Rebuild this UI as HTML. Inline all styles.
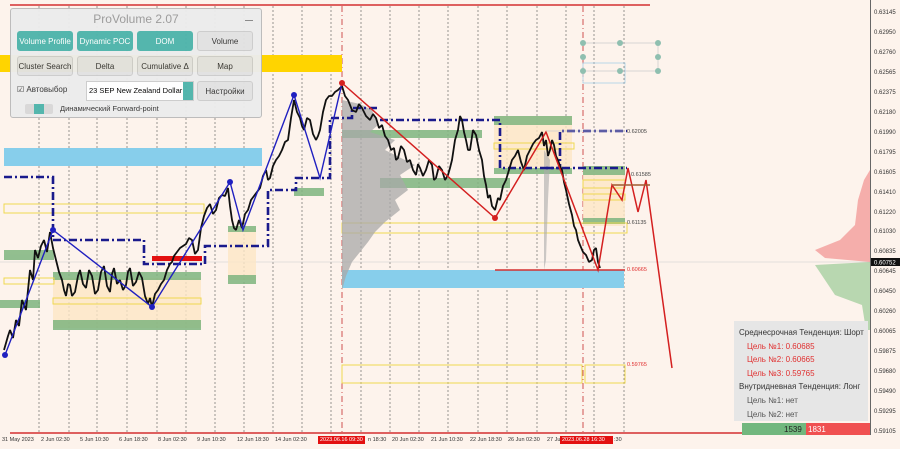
<!DOCTYPE html>
<html><head><meta charset="utf-8">
<style>
*{margin:0;padding:0;box-sizing:border-box}
body{width:900px;height:449px;overflow:hidden;background:#fdf3ec;font-family:"Liberation Sans","DejaVu Sans",sans-serif;position:relative}
svg{position:absolute;left:0;top:0}
.panel{position:absolute;left:10px;top:8px;width:252px;height:110px;background:#ececec;border:1px solid #bbb;border-radius:3px;opacity:.97}
.ttl{position:absolute;left:0;top:3px;width:100%;text-align:center;font-size:12px;color:#9a9a9a}
.mn{position:absolute;right:8px;top:4px;width:8px;border-bottom:1px solid #888;height:8px}
.b{position:absolute;height:20px;border-radius:3px;font-size:8px;text-align:center;line-height:20px;color:#333;background:#e2e2e2;border:1px solid #ccc}
.t{background:#4fb5ab;color:#fff;border-color:#4fb5ab}
.ax{position:absolute;left:874px;font-size:6px;color:#333}
.dt{position:absolute;top:437px;font-size:5.5px;color:#333;white-space:nowrap}
.info{position:absolute;left:734px;top:321px;width:134px;height:100px;background:#e6e6e6;font-size:8px;color:#333;padding:5px 0 0 5px;line-height:13.6px}
.info .r{color:#e03030;padding-left:8px}.info .g{color:#555;padding-left:8px}
</style></head><body>
<svg width="900" height="449" viewBox="0 0 900 449">
<g stroke="#555" stroke-width="0.6" stroke-dasharray="2,2">
<line x1="39" y1="6" x2="39" y2="433"/><line x1="69" y1="6" x2="69" y2="433"/><line x1="97" y1="6" x2="97" y2="433"/><line x1="127" y1="6" x2="127" y2="433"/><line x1="157" y1="6" x2="157" y2="433"/><line x1="186" y1="6" x2="186" y2="433"/><line x1="215" y1="6" x2="215" y2="433"/><line x1="244" y1="6" x2="244" y2="433"/><line x1="273" y1="6" x2="273" y2="433"/><line x1="302" y1="6" x2="302" y2="433"/><line x1="331" y1="6" x2="331" y2="433"/><line x1="361" y1="6" x2="361" y2="433"/><line x1="390" y1="6" x2="390" y2="433"/><line x1="419" y1="6" x2="419" y2="433"/><line x1="448" y1="6" x2="448" y2="433"/><line x1="478" y1="6" x2="478" y2="433"/><line x1="507" y1="6" x2="507" y2="433"/><line x1="537" y1="6" x2="537" y2="433"/><line x1="566" y1="6" x2="566" y2="433"/><line x1="594" y1="6" x2="594" y2="433"/><line x1="624" y1="6" x2="624" y2="433"/>
</g>
<g stroke="#d05050" stroke-width="1" stroke-dasharray="6,3,1,3"><line x1="342" y1="6" x2="342" y2="433"/><line x1="583" y1="6" x2="583" y2="433"/></g>
<line x1="10" y1="5" x2="650" y2="5" stroke="#d43030" stroke-width="1.5"/>
<line x1="10" y1="433" x2="870" y2="433" stroke="#d43030" stroke-width="1.5"/>
<line x1="870.5" y1="0" x2="870.5" y2="435" stroke="#666" stroke-width="1"/>
<line x1="0" y1="262" x2="870" y2="262" stroke="#ccc" stroke-width="0.6"/>
<rect x="0" y="55" width="342" height="17" fill="#ffd400"/>
<rect x="4" y="148" width="258" height="18" fill="#87ceeb"/>
<rect x="342" y="270" width="282" height="18" fill="#87ceeb"/>
<rect x="53" y="278" width="148" height="50" fill="#fde6c6" opacity=".8"/>
<rect x="228" y="230" width="28" height="50" fill="#fde6c6" opacity=".8"/>
<rect x="494" y="116" width="78" height="52" fill="#fde6c6" opacity=".8"/>
<rect x="583" y="166" width="42" height="60" fill="#fde6c6" opacity=".8"/>
<g fill="#7fb57f" opacity=".85">
<rect x="4" y="250" width="50" height="10"/><rect x="53" y="272" width="148" height="8"/><rect x="53" y="320" width="148" height="10"/><rect x="228" y="275" width="28" height="9"/><rect x="228" y="226" width="28" height="6"/>
<rect x="294" y="188" width="30" height="8"/><rect x="342" y="130" width="140" height="8"/><rect x="380" y="178" width="130" height="10"/><rect x="494" y="116" width="78" height="9"/><rect x="494" y="168" width="78" height="6"/><rect x="583" y="166" width="42" height="9"/><rect x="583" y="218" width="42" height="6"/><rect x="0" y="300" width="40" height="8"/>
</g>
<g fill="none" stroke="#f0d850" stroke-width="1">
<rect x="4" y="204" width="200" height="9"/><rect x="4" y="278" width="50" height="6"/><rect x="53" y="298" width="148" height="6"/><rect x="342" y="223" width="285" height="10"/><rect x="494" y="143" width="80" height="6"/><rect x="583" y="180" width="42" height="8"/><rect x="583" y="194" width="42" height="6"/><rect x="585" y="365" width="40" height="18"/><rect x="342" y="365" width="240" height="18"/>
</g>
<rect x="152" y="256" width="50" height="5" fill="#e31010"/>
<path d="M342,100 L360,104 L372,110 L378,125 L370,132 L395,140 L385,150 L415,165 L400,175 L408,190 L395,200 L400,210 L385,222 L375,232 L368,242 L360,252 L352,262 L346,276 L342,290 Z" fill="#a8a8a8" opacity=".75"/>
<path d="M544,150 L550,160 L548,200 L546,260 L544,270 Z" fill="#aaa" opacity=".6"/>
<path d="M870,170 L864,180 L858,200 L855,225 L840,240 L815,250 L825,258 L870,262 Z" fill="#f08080" opacity=".6"/>
<path d="M870,262 L815,265 L825,280 L835,295 L862,305 L866,330 L870,330 Z" fill="#7fbf7f" opacity=".55"/>
<g fill="none" stroke="#1a1a8c" stroke-width="2.6" stroke-dasharray="8,3,2,3">
<polyline points="4,177 53,177 53,240 144,240 144,264 205,264 205,246 268,246 268,190 296,190 296,178 330,178 330,118 352,118 352,108 380,108"/>
<polyline points="380,120 500,120 500,168 560,168 560,131 627,131"/>
<polyline points="546,168 627,168"/>
</g>
<line x1="495" y1="270" x2="625" y2="270" stroke="#d43030" stroke-width="1.5"/>
<polyline fill="none" stroke="#111" stroke-width="1.8" stroke-linejoin="bevel" points="4,350 8,336 10,330 13,338 16,320 19,326 22,300 26,310 30,270 33,280 35,250 38,258 41,246 44,240 47,252 50,232 53,248 56,260 59,272 62,280 64,290 66,296 68,284 70,285 72,296 75,292 78,276 80,270 83,284 86,288 89,270 92,276 95,294 98,290 101,272 104,266 107,286 110,292 112,274 114,268 117,284 120,280 123,290 126,285 128,272 130,268 133,286 136,282 139,272 142,278 145,296 148,304 150,298 152,307 155,294 158,290 161,284 164,280 167,270 170,264 172,262 174,256 177,252 180,248 183,246 186,244 189,238 192,240 195,254 198,250 201,228 204,216 207,208 210,204 213,214 216,210 219,198 222,195 225,196 228,188 230,206 232,220 234,228 236,230 239,220 242,228 245,214 248,210 251,200 254,196 257,192 260,188 263,176 266,170 268,180 270,178 273,166 276,160 279,156 282,150 285,142 288,140 291,118 294,100 297,112 300,118 302,126 304,130 307,118 310,120 313,134 316,140 318,136 320,130 323,112 326,100 329,96 332,96 335,92 338,90 340,88 342,86 345,96 348,100 352,110 356,112 359,104 362,108 366,116 370,120 373,114 376,118 379,128 382,125 385,136 388,140 391,150 394,148 396,160 398,158 401,146 404,150 407,162 410,160 413,170 416,175 418,164 420,168 423,176 426,170 429,160 432,165 434,180 436,178 439,166 442,170 445,180 448,175 450,168 452,160 455,140 458,130 460,116 462,120 464,132 466,140 468,150 470,150 473,130 476,135 479,150 482,160 484,176 486,185 488,198 490,195 492,206 495,210 498,198 500,200 503,186 506,180 509,170 512,160 515,156 518,150 521,162 524,170 527,156 530,150 533,144 536,140 539,138 542,132 544,146 546,140 548,156 550,150 552,140 554,145 556,156 558,160 560,166 562,170 564,182 566,190 569,204 572,215 574,226 576,230 578,240 580,245 583,252 586,255 589,262 592,260 594,250 596,248 598,262 600,268"/>
<polyline fill="none" stroke="#2020c0" stroke-width="1.4" points="5,355 53,230 152,307 230,182 243,230 294,95 320,178 342,83"/>
<g fill="#2020c0"><circle cx="53" cy="230" r="3"/><circle cx="152" cy="307" r="3"/><circle cx="230" cy="182" r="3"/><circle cx="294" cy="95" r="3"/><circle cx="5" cy="355" r="3"/></g>
<polyline fill="none" stroke="#d42020" stroke-width="1.5" points="342,83 495,218 546,132 598,270 612,185 622,200 628,168 638,212 646,180 672,368"/>
<g fill="#d42020"><circle cx="342" cy="83" r="3"/><circle cx="495" cy="218" r="3"/></g>
<line x1="612" y1="185" x2="650" y2="185" stroke="#a05a30" stroke-width="1.5"/>
<g stroke="#ccc" stroke-width="0.8" fill="none"><polyline points="583,43 620,43 658,43 658,71 583,71"/><rect x="583" y="63" width="42" height="20" stroke="#a8d0e8"/><line x1="546" y1="131" x2="625" y2="131"/></g>
<g fill="#8fbfb0"><circle cx="583" cy="43" r="3"/><circle cx="620" cy="43" r="3"/><circle cx="658" cy="43" r="3"/><circle cx="583" cy="57" r="3"/><circle cx="658" cy="57" r="3"/><circle cx="583" cy="71" r="3"/><circle cx="620" cy="71" r="3"/><circle cx="658" cy="71" r="3"/></g>
<g font-size="5.5" fill="#444"><text x="627" y="133">0.62005</text><text x="631" y="176">0.61585</text><text x="627" y="224">0.61135</text><text x="627" y="271" fill="#e03030">0.60665</text><text x="627" y="366" fill="#e03030">0.59765</text></g>
<rect x="742" y="423" width="64" height="12" fill="#72b77e"/><rect x="806" y="423" width="64" height="12" fill="#f05050"/>
<text x="784" y="432" font-size="8" fill="#222">1539</text><text x="808" y="432" font-size="8" fill="#fff">1831</text>
<rect x="871" y="258" width="29" height="8" fill="#111"/><text x="874" y="264.5" font-size="6" fill="#fff">0.60752</text>
<rect x="318" y="436" width="47" height="8" fill="#e31010"/><rect x="560" y="436" width="53" height="8" fill="#e31010"/>
</svg>
<div class="panel">
<div class="ttl">ProVolume 2.07</div><div class="mn"></div>
<div class="b t" style="left:6px;top:22px;width:56px">Volume Profile</div>
<div class="b t" style="left:66px;top:22px;width:56px">Dynamic POC</div>
<div class="b t" style="left:126px;top:22px;width:56px">DOM</div>
<div class="b" style="left:186px;top:22px;width:56px">Volume</div>
<div class="b" style="left:6px;top:47px;width:56px">Cluster Search</div>
<div class="b" style="left:66px;top:47px;width:56px">Delta</div>
<div class="b" style="left:126px;top:47px;width:56px">Cumulative Δ</div>
<div class="b" style="left:186px;top:47px;width:56px">Map</div>
<div style="position:absolute;left:6px;top:76px;font-size:8px;color:#333">☑ Автовыбор</div>
<div style="position:absolute;left:75px;top:72px;width:108px;height:20px;background:#fff;border:1px solid #ccc;font-size:7.5px;line-height:18px;padding-left:2px">23 SEP New Zealand Dollar<span style="position:absolute;right:0;top:0;width:10px;height:18px;background:#4fb5ab"></span></div>
<div class="b" style="left:186px;top:72px;width:56px">Настройки</div>
<div style="position:absolute;left:14px;top:95px;width:28px;height:10px;background:#d8d8d8;border-radius:2px"><span style="position:absolute;left:9px;top:0;width:10px;height:10px;background:#4fb5ab"></span></div>
<div style="position:absolute;left:49px;top:95px;font-size:7.5px;color:#333">Динамический Forward-point</div>
</div>
<div class="info">Среднесрочная Тенденция: Шорт<div class="r">Цель №1: 0.60685</div><div class="r">Цель №2: 0.60665</div><div class="r">Цель №3: 0.59765</div>Внутридневная Тенденция: Лонг<div class="g">Цель №1: нет</div><div class="g">Цель №2: нет</div></div>
<div class="ax" style="top:10px">0.63145</div><div class="ax" style="top:30px">0.62950</div><div class="ax" style="top:50px">0.62760</div><div class="ax" style="top:70px">0.62565</div><div class="ax" style="top:90px">0.62375</div><div class="ax" style="top:110px">0.62180</div><div class="ax" style="top:130px">0.61990</div><div class="ax" style="top:150px">0.61795</div><div class="ax" style="top:170px">0.61605</div><div class="ax" style="top:190px">0.61410</div><div class="ax" style="top:210px">0.61220</div><div class="ax" style="top:229px">0.61030</div><div class="ax" style="top:249px">0.60835</div><div class="ax" style="top:269px">0.60645</div><div class="ax" style="top:289px">0.60450</div><div class="ax" style="top:309px">0.60260</div><div class="ax" style="top:329px">0.60065</div><div class="ax" style="top:349px">0.59875</div><div class="ax" style="top:369px">0.59680</div><div class="ax" style="top:389px">0.59490</div><div class="ax" style="top:409px">0.59295</div><div class="ax" style="top:429px">0.59105</div>
<div class="dt" style="left:2px">31 May 2023</div><div class="dt" style="left:41px">2 Jun 02:30</div><div class="dt" style="left:80px">5 Jun 10:30</div><div class="dt" style="left:119px">6 Jun 18:30</div><div class="dt" style="left:158px">8 Jun 02:30</div><div class="dt" style="left:197px">9 Jun 10:30</div><div class="dt" style="left:237px">12 Jun 18:30</div><div class="dt" style="left:275px">14 Jun 02:30</div><div class="dt" style="left:320px;color:#fff">2023.06.16 09:30</div><div class="dt" style="left:368px">n 18:30</div><div class="dt" style="left:392px">20 Jun 02:30</div><div class="dt" style="left:431px">21 Jun 10:30</div><div class="dt" style="left:470px">22 Jun 18:30</div><div class="dt" style="left:508px">26 Jun 02:30</div><div class="dt" style="left:547px">27 Ju</div><div class="dt" style="left:562px;color:#fff">2023.06.28 16:30</div><div class="dt" style="left:614px">:30</div>
</body></html>
